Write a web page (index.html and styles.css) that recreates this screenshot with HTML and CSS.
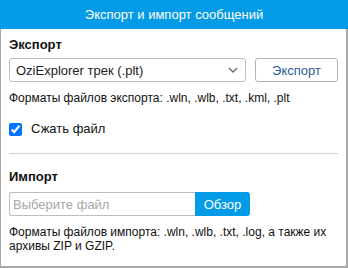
FILE: index.html
```html
<!DOCTYPE html>
<html>
<head>
	<meta charset="utf-8">
	<title>Экспорт и импорт сообщений</title>
	<link rel="stylesheet" href="styles.css">
</head>
<body>
	<div class="dialog">
		<div class="dialog-title">Экспорт и импорт сообщений</div>
		<div class="dialog-body">
			<div class="section-title export-title">Экспорт</div>
			<div class="export-row">
				<div class="select">
					<span>OziExplorer трек (.plt)</span>
					<svg width="10" height="6" viewBox="0 0 10 6"><path d="M1 1 L5 5 L9 1" fill="none" stroke="#666" stroke-width="1.3"/></svg>
				</div>
				<button class="btn">Экспорт</button>
			</div>
			<p class="hint export-hint">Форматы файлов экспорта: .wln, .wlb, .txt, .kml, .plt</p>
			<label class="check"><input type="checkbox" checked> Сжать файл</label>
			<hr class="divider">
			<div class="section-title import-title">Импорт</div>
			<div class="file-row">
				<input class="file-input" type="text" placeholder="Выберите файл">
				<button class="btn-primary">Обзор</button>
			</div>
			<p class="hint import-hint">Форматы файлов импорта: .wln, .wlb, .txt, .log, а также их архивы ZIP и GZIP.</p>
		</div>
	</div>
</body>
</html>
```
FILE: styles.css
```css
html, body { margin: 0; padding: 0; background: #ffffff; }
body { font-family: "Liberation Sans", Arial, sans-serif; color: #111111; }

.dialog {
	width: 348px;
	height: 268px;
	box-sizing: border-box;
	border: 1px solid #a6a6a6;
	border-top: none;
	border-right-width: 2px;
	border-bottom-width: 2px;
}
.dialog-title {
	height: 29px;
	line-height: 29px;
	margin: 0 -2px 0 -1px;
	background-color: #039be5;
	color: #ffffff;
	font-size: 13px;
	text-align: center;
}
.dialog-body { padding: 0 8px; }

.section-title { font-size: 13px; font-weight: bold; line-height: 16px; }
.export-title { margin-top: 8px; }
.import-title { margin-top: 15px; }

.export-row { display: flex; gap: 9px; margin-top: 5px; }
.select {
	width: 237px;
	height: 24px;
	box-sizing: border-box;
	border: 1px solid #bdbdbd;
	border-radius: 3px;
	padding: 0 7px 0 6px;
	display: flex;
	align-items: center;
	justify-content: space-between;
	font-size: 13px;
	color: #222222;
}
.btn {
	width: 83px;
	height: 24px;
	border: 1px solid #b5b5b5;
	border-radius: 3px;
	background: #ffffff;
	color: #2d5c9c;
	font: 13px "Liberation Sans", Arial, sans-serif;
	padding: 0;
}

.hint { margin: 0; font-size: 12px; line-height: 14px; }
.export-hint { margin-top: 9px; }
.import-hint { margin-top: 9px; padding-right: 4px; }

.check {
	display: flex;
	align-items: center;
	gap: 9px;
	margin-top: 16px;
	font-size: 13px;
	line-height: 16px;
}
.check input { margin: 0; width: 13px; height: 13px; accent-color: #0075ff; }

.divider { border: none; border-top: 1px solid #d0d0d0; margin: 16px 0 0 0; }

.file-row { display: flex; margin-top: 7px; }
.file-input {
	width: 186px;
	height: 24px;
	box-sizing: border-box;
	border: 1px solid #bdbdbd;
	border-right: none;
	border-radius: 3px 0 0 3px;
	padding: 0 3px;
	font: 13px "Liberation Sans", Arial, sans-serif;
	outline: none;
}
.file-input::placeholder { color: #a8a8a8; }
.btn-primary {
	width: 55px;
	height: 24px;
	border: none;
	border-radius: 0 3px 3px 0;
	background-color: #039be5;
	color: #ffffff;
	font: 13px "Liberation Sans", Arial, sans-serif;
	padding: 0;
}
```
